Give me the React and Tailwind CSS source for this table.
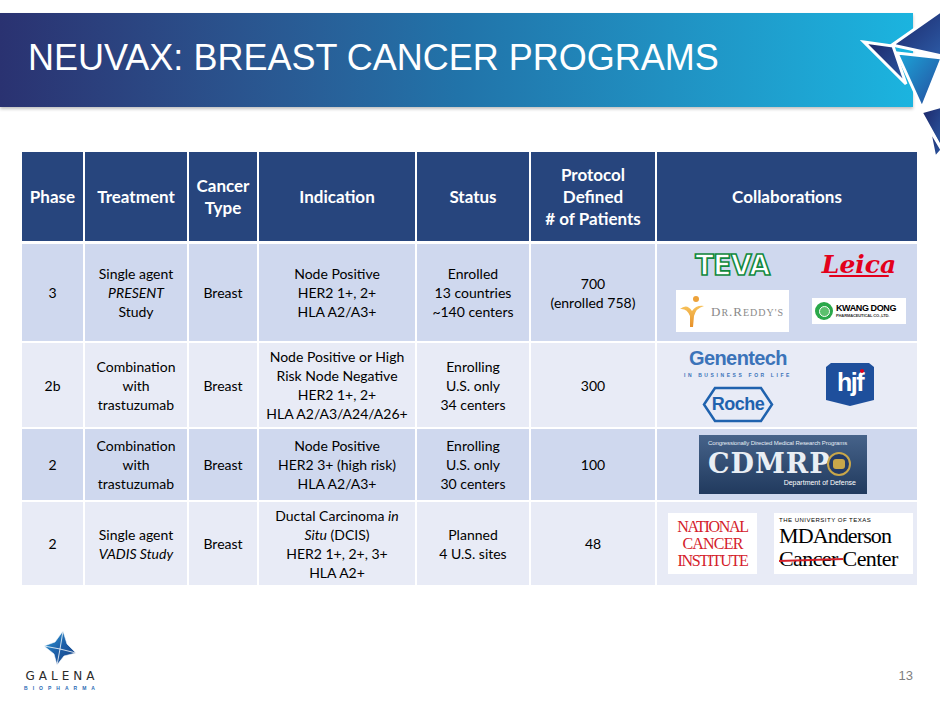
import React from "react";

const rows = [
  {
    bg: "bg-[#cfd8ee]",
    h: "h-[97px]",
    phase: "3",
    treatment: (
      <>
        Single agent
        <br />
        <i>PRESENT</i>
        <br />
        Study
      </>
    ),
    indication: (
      <>
        Node Positive
        <br />
        HER2 1+, 2+
        <br />
        HLA A2/A3+
      </>
    ),
    status: (
      <>
        Enrolled
        <br />
        13 countries
        <br />
        ~140 centers
      </>
    ),
    patients: (
      <>
        700
        <br />
        (enrolled 758)
      </>
    ),
    collab: "row1",
  },
  {
    bg: "bg-[#e8ebf6]",
    h: "h-[84px]",
    phase: "2b",
    treatment: (
      <>
        Combination
        <br />
        with
        <br />
        trastuzumab
      </>
    ),
    indication: (
      <>
        Node Positive or High
        <br />
        Risk Node Negative
        <br />
        HER2 1+, 2+
        <br />
        HLA A2/A3/A24/A26+
      </>
    ),
    status: (
      <>
        Enrolling
        <br />
        U.S. only
        <br />
        34 centers
      </>
    ),
    patients: "300",
    collab: "row2",
  },
  {
    bg: "bg-[#cfd8ee]",
    h: "h-[71px]",
    phase: "2",
    treatment: (
      <>
        Combination
        <br />
        with
        <br />
        trastuzumab
      </>
    ),
    indication: (
      <>
        Node Positive
        <br />
        HER2 3+ (high risk)
        <br />
        HLA A2/A3+
      </>
    ),
    status: (
      <>
        Enrolling
        <br />
        U.S. only
        <br />
        30 centers
      </>
    ),
    patients: "100",
    collab: "row3",
  },
  {
    bg: "bg-[#e8ebf6]",
    h: "h-[83px]",
    phase: "2",
    treatment: (
      <>
        Single agent
        <br />
        <i>VADIS Study</i>
      </>
    ),
    indication: (
      <>
        Ductal Carcinoma <i>in</i>
        <br />
        <i>Situ</i> (DCIS)
        <br />
        HER2 1+, 2+, 3+
        <br />
        HLA A2+
      </>
    ),
    status: (
      <>
        Planned
        <br />4 U.S. sites
      </>
    ),
    patients: "48",
    collab: "row4",
  },
];

const widths = ["w-[61px]", "w-[102px]", "w-[68px]", "w-[156px]", "w-[112px]", "w-[124px]", "w-[260px]"];

function HeaderStar() {
  return (
    <svg className="absolute left-[850px] top-0" width="90" height="165" viewBox="850 0 90 165">
      <defs>
        <linearGradient id="dk" x1="0" y1="0" x2="1" y2="1">
          <stop offset="0" stopColor="#1c2566" />
          <stop offset="1" stopColor="#2c5aa5" />
        </linearGradient>
        <linearGradient id="cy" x1="0" y1="0" x2="1" y2="1">
          <stop offset="0" stopColor="#1ba7da" />
          <stop offset="1" stopColor="#27479a" />
        </linearGradient>
      </defs>
      <g stroke="#fff" strokeWidth="3" strokeLinejoin="miter">
        <polygon points="864,42 893,46 906,84" fill="url(#dk)" />
        <polygon points="892,45 942,10 942,56" fill="url(#dk)" />
        <polygon points="897,53 942,58 922,108" fill="url(#cy)" />
        <polygon points="921,112 942,106 942,150" fill="url(#dk)" />
        <polygon points="929,128 942,150 935,158" fill="url(#dk)" />
      </g>
    </svg>
  );
}

function Teva() {
  return (
    <div
      className="flex h-[29px] w-[77px] items-center justify-center text-[34px] font-black leading-none tracking-[-1px] text-white [-webkit-text-stroke:2px_#118a3e]"
      style={{ fontFamily: '"DejaVu Sans", sans-serif' }}
    >
      <span className="inline-block scale-x-[0.8] scale-y-[0.85]">TEVA</span>
    </div>
  );
}

function Leica() {
  return (
    <div className="relative flex h-[29px] w-[64px] items-center justify-center">
      <span
        className="text-[25px] font-bold italic leading-none text-[#e3001b]"
        style={{ fontFamily: '"DejaVu Serif", serif' }}
      >
        Leica
      </span>
      <span className="absolute bottom-[2px] left-[2px] h-[2px] w-[60px] rounded-full bg-[#e3001b]" />
    </div>
  );
}

function DrReddys() {
  return (
    <div className="flex h-[42px] w-[113px] items-center gap-[6px] bg-white pl-[3px]">
      <svg width="26" height="34" viewBox="0 0 26 34">
        <defs>
          <linearGradient id="or" x1="0" y1="0" x2="0" y2="1">
            <stop offset="0" stopColor="#f7c25a" />
            <stop offset="1" stopColor="#e7912a" />
          </linearGradient>
        </defs>
        <circle cx="17" cy="5" r="3" fill="#eda23a" />
        <path d="M1 15 Q8 9 13 17 Q17 11 25 12 Q17 14 15 22 L14 33 L11 33 L11 22 Q8 14 1 15 Z" fill="url(#or)" />
      </svg>
      <span
        className="text-[13px] leading-none tracking-[1px] text-[#8a8a8a]"
        style={{ fontFamily: '"Liberation Serif", serif' }}
      >
        D<span className="text-[10px]">R</span>.R<span className="text-[10px]">EDDY'S</span>
      </span>
    </div>
  );
}

function KwangDong() {
  return (
    <div className="flex h-[26px] w-[94px] items-center gap-[3px] bg-white pl-[3px]">
      <div className="flex h-[18px] w-[18px] items-center justify-center rounded-full bg-[#2aa84a]">
        <div className="h-[11px] w-[11px] rounded-full border border-white bg-[#5cc06e]" />
      </div>
      <div className="flex flex-col leading-none" style={{ fontFamily: '"Liberation Sans", sans-serif' }}>
        <span className="text-[9px] font-bold tracking-[-0.4px] text-black">KWANG DONG</span>
        <span className="mt-[1px] text-[4px] font-bold tracking-[-0.1px] text-[#333]">PHARMACEUTICAL CO.,LTD.</span>
      </div>
    </div>
  );
}

function Genentech() {
  return (
    <div className="flex flex-col items-center" style={{ fontFamily: '"Liberation Sans", sans-serif' }}>
      <span className="text-[20px] font-bold leading-none tracking-[-0.6px] text-[#3b73b9]">Genentech</span>
      <span className="mt-[5px] whitespace-nowrap text-[5px] font-bold leading-none tracking-[2.6px] text-[#3b73b9]">
        IN BUSINESS FOR LIFE
      </span>
    </div>
  );
}

function Roche() {
  return (
    <div className="relative flex h-[37px] w-[72px] items-center justify-center">
      <svg className="absolute inset-0" width="72" height="37" viewBox="0 0 72 37">
        <polygon points="13,2 59,2 70,18.5 59,35 13,35 2,18.5" fill="none" stroke="#1f62ae" strokeWidth="2.5" />
      </svg>
      <span
        className="relative text-[18px] font-bold leading-none tracking-[-0.5px] text-[#1f62ae]"
        style={{ fontFamily: '"Liberation Sans", sans-serif' }}
      >
        Roche
      </span>
    </div>
  );
}

function Hjf() {
  return (
    <div className="relative flex h-[44px] w-[48px] items-start justify-center">
      <svg className="absolute inset-0" width="48" height="44" viewBox="0 0 48 44">
        <polygon points="0,4 5,0 43,0 48,4 48,37 24,43 0,37" fill="#1e4f9c" />
      </svg>
      <span
        className="relative mt-[7px] text-[25px] font-bold leading-none tracking-[-1.5px] text-white"
        style={{ fontFamily: '"Liberation Sans", sans-serif' }}
      >
        hjf
      </span>
      <span className="absolute right-[10px] top-[6px] h-[4px] w-[4px] rounded-full bg-[#e3001b]" />
    </div>
  );
}

function Cdmrp() {
  return (
    <div className="relative flex h-[59px] w-[168px] flex-col bg-gradient-to-b from-[#46638a] to-[#213a5e] px-[9px] pt-[5px]">
      <span
        className="whitespace-nowrap text-[6px] leading-none tracking-[-0.1px] text-[#e6ecf4]"
        style={{ fontFamily: '"Liberation Sans", sans-serif' }}
      >
        Congressionally Directed Medical Research Programs
      </span>
      <div className="mt-[4px] flex items-center">
        <span
          className="text-[27px] font-bold leading-none tracking-[1px] text-[#e9eef4]"
          style={{ fontFamily: '"DejaVu Serif", serif' }}
        >
          CDMRP
        </span>
        <div className="-ml-[4px] flex h-[24px] w-[24px] items-center justify-center rounded-full border-2 border-[#c8a64a] bg-[#233a67]">
          <div className="h-[10px] w-[12px] rounded-[3px] bg-[#c8a64a]" />
        </div>
      </div>
      <span
        className="mt-[2px] self-end pr-[2px] text-[7px] leading-none text-white"
        style={{ fontFamily: '"Liberation Sans", sans-serif' }}
      >
        Department of Defense
      </span>
    </div>
  );
}

function Nci() {
  return (
    <div
      className="flex h-[61px] w-[89px] flex-col items-center justify-center bg-white text-[#d4202a]"
      style={{ fontFamily: '"Liberation Serif", serif' }}
    >
      <span className="text-[16px] leading-[17px] tracking-[-1.3px]">NATIONAL</span>
      <span className="text-[16px] leading-[17px] tracking-[-0.8px]">CANCER</span>
      <span className="text-[16px] leading-[17px] tracking-[-1.3px]">INSTITUTE</span>
    </div>
  );
}

function MdAnderson() {
  return (
    <div
      className="flex h-[61px] w-[139px] flex-col justify-center bg-white pl-[5px] text-black"
      style={{ fontFamily: '"Liberation Serif", serif' }}
    >
      <span className="text-[6px] leading-none tracking-[0.5px]" style={{ fontFamily: '"Liberation Sans", sans-serif' }}>
        THE UNIVERSITY OF TEXAS
      </span>
      <span className="mt-[1px] whitespace-nowrap text-[22px] leading-[23px] tracking-[-0.9px]">MDAnderson</span>
      <span className="relative whitespace-nowrap text-[22px] leading-[23px] tracking-[-0.6px]">
        Cancer Center
        <span className="absolute left-0 top-[12px] h-[2px] w-[64px] -rotate-2 bg-[#d4202a]" />
      </span>
    </div>
  );
}

function Collab({ kind }) {
  if (kind === "row1") {
    return (
      <div className="flex flex-col pt-[6px]">
        <div className="flex h-[29px] items-center">
          <div className="ml-[37px]">
            <Teva />
          </div>
          <div className="ml-[56px]">
            <Leica />
          </div>
        </div>
        <div className="mt-[11px] flex h-[42px] items-center">
          <div className="ml-[19px]">
            <DrReddys />
          </div>
          <div className="ml-[23px]">
            <KwangDong />
          </div>
        </div>
      </div>
    );
  }
  if (kind === "row2") {
    return (
      <div className="flex h-full items-center">
        <div className="ml-[25px] flex w-[112px] flex-col items-center gap-[8px]">
          <Genentech />
          <Roche />
        </div>
        <div className="ml-[32px]">
          <Hjf />
        </div>
      </div>
    );
  }
  if (kind === "row3") {
    return (
      <div className="flex h-full items-center pl-[42px]">
        <Cdmrp />
      </div>
    );
  }
  return (
    <div className="flex h-full items-center gap-[17px] pl-[11px]">
      <Nci />
      <MdAnderson />
    </div>
  );
}

function GalenaLogo() {
  return (
    <div className="flex w-[80px] flex-col items-center">
      <svg width="36" height="36" viewBox="42 629 36 36">
        <defs>
          <linearGradient id="gs" x1="0" y1="0" x2="1" y2="1">
            <stop offset="0" stopColor="#2fa3dc" />
            <stop offset="0.5" stopColor="#1d5fa8" />
            <stop offset="1" stopColor="#173f80" />
          </linearGradient>
        </defs>
        <polygon
          points="63,630 67,643 76,652 64,655 57,664 54,653 44,645 55,641"
          fill="url(#gs)"
          stroke="#fff"
          strokeWidth="0.6"
        />
        <g stroke="#fff" strokeWidth="0.8">
          <line x1="60" y1="648" x2="63" y2="630" />
          <line x1="60" y1="648" x2="76" y2="652" />
          <line x1="60" y1="648" x2="57" y2="664" />
          <line x1="60" y1="648" x2="44" y2="645" />
        </g>
      </svg>
      <span
        className="mt-[4px] pl-[4px] text-[12px] leading-none tracking-[4px] text-[#2b2b2b]"
        style={{ fontFamily: '"DejaVu Sans", sans-serif' }}
      >
        GALENA
      </span>
      <span
        className="mt-[4px] pl-[4px] text-[5px] font-bold leading-none tracking-[5px] text-[#2a6bb5]"
        style={{ fontFamily: '"Liberation Sans", sans-serif' }}
      >
        BIOPHARMA
      </span>
    </div>
  );
}

export default function App() {
  return (
    <div
      className="relative h-[705px] w-[940px] overflow-hidden bg-white"
      style={{ fontFamily: 'Lato, "Liberation Sans", sans-serif' }}
    >
      <div className="mt-[13px] flex h-[94px] w-[913px] items-center bg-gradient-to-r from-[#2a3271] via-[#2173a9] to-[#1bb4df] pb-[4px] pl-[28px] shadow-[0_2px_3px_rgba(0,0,0,0.25)]">
        <h1
          className="text-[36px] leading-none text-white"
          style={{ fontFamily: '"Liberation Sans", Arial, sans-serif' }}
        >
          NEUVAX: BREAST CANCER PROGRAMS
        </h1>
      </div>
      <HeaderStar />

      <div className="ml-[22px] mt-[45px] flex w-[895px] flex-col">
        <div className="flex h-[89px] gap-[2px] text-[17px] font-bold leading-[22px] text-white">
          {["Phase", "Treatment", "Cancer\nType", "Indication", "Status", "Protocol\nDefined\n# of Patients", "Collaborations"].map(
            (label, i) => (
              <div
                key={label}
                className={`${widths[i]} flex shrink-0 items-center justify-center whitespace-pre-line bg-[#27457d] text-center`}
              >
                {label}
              </div>
            )
          )}
        </div>
        <div className="mt-[3px] flex flex-col gap-[2px]">
          {rows.map((r, idx) => (
            <div key={idx} className={`flex ${r.h} gap-[2px] text-[14px] leading-[19px] text-black`}>
              {[r.phase, r.treatment, "Breast", r.indication, r.status, r.patients].map((c, i) => (
                <div
                  key={i}
                  className={`${widths[i]} ${r.bg} flex shrink-0 flex-col items-center justify-center text-center`}
                >
                  <div>{c}</div>
                </div>
              ))}
              <div className={`${widths[6]} ${r.bg} shrink-0`}>
                <Collab kind={r.collab} />
              </div>
            </div>
          ))}
        </div>
      </div>

      <div className="mt-[45px] flex items-end justify-between pl-[20px] pr-[27px]">
        <GalenaLogo />
        <span
          className="mb-[9px] text-[13px] leading-none text-[#7f7f7f]"
          style={{ fontFamily: '"Liberation Sans", sans-serif' }}
        >
          13
        </span>
      </div>
    </div>
  );
}
